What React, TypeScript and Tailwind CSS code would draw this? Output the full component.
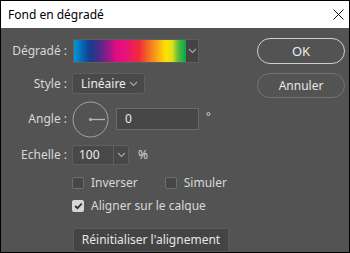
import React from "react";

function Chevron({ className = "" }: { className?: string }) {
  return (
    <svg width="9" height="6" viewBox="0 0 9 6" className={className}>
      <path d="M1 1 L4.5 4.5 L8 1" fill="none" stroke="#a8a8a8" strokeWidth="1.1" />
    </svg>
  );
}

function Check({ checked }: { checked?: boolean }) {
  return checked ? (
    <div className="w-[12px] h-[12px] rounded-[2px] bg-[#d6d6d6] flex items-center justify-center">
      <svg width="9" height="8" viewBox="0 0 9 8">
        <path d="M1.2 4 L3.5 6.2 L7.8 1.5" fill="none" stroke="#2e2e2e" strokeWidth="1.8" />
      </svg>
    </div>
  ) : (
    <div className="w-[12px] h-[12px] rounded-[2px] bg-[#474747] border border-[#6e6e6e]" />
  );
}

export default function App() {
  return (
    <div className="w-[350px] h-[253px] border border-black bg-[#535353] flex flex-col font-['Noto_Sans',sans-serif] text-[12px] leading-none select-none overflow-hidden">
      <div className="h-[27px] bg-white flex items-center justify-between pl-[7px] pr-[4px] shrink-0">
        <span className="text-black text-[12px]">Fond en dégradé</span>
        <svg width="11" height="11" viewBox="0 0 11 11" className="mr-[1px]">
          <path d="M0.5 0.5 L10.5 10.5 M10.5 0.5 L0.5 10.5" stroke="#111" strokeWidth="1" />
        </svg>
      </div>
      <div className="flex flex-1">
        <div className="flex flex-col w-[250px] text-[#d8d8d8]">
          {/* Dégradé */}
          <div className="flex items-center mt-[11px] h-[24px]">
            <div className="w-[71px] text-right pr-[5px]">Dégradé :</div>
            <div className="ml-[1px] flex h-[24px] w-[126px] border border-[#5e5e5e] bg-[#444444]">
              <div className="flex-1 bg-[linear-gradient(to_right,#0098d8_0%,#0a63b0_8%,#123f8e_14%,#4b2a8a_22%,#8e1c86_30%,#e40b80_38%,#e8127a_46%,#f02a3a_58%,#f26a22_66%,#f8a51a_74%,#ffe200_82%,#d8e01a_88%,#5abb3c_93%,#00a84a_100%)]" />
              <div className="w-[12px] flex items-center justify-center">
                <Chevron />
              </div>
            </div>
          </div>
          {/* Style */}
          <div className="flex items-center mt-[10px] h-[21px]">
            <div className="w-[71px] text-right pr-[5px]">Style :</div>
            <div className="flex items-center h-[21px] w-[73px] rounded-[3px] border border-[#5f5f5f] bg-[#494949] pl-[8px] pr-[6px] justify-between text-[#ececec]">
              <span>Linéaire</span>
              <Chevron />
            </div>
          </div>
          {/* Angle */}
          <div className="flex items-center mt-[7px] h-[36px]">
            <div className="w-[71px] text-right pr-[5px]">Angle :</div>
            <svg width="37" height="37" viewBox="0 0 37 37">
              <circle cx="18.5" cy="18.5" r="17.5" fill="none" stroke="#a4a4a4" strokeWidth="1" />
              <circle cx="18.5" cy="18.5" r="1.6" fill="#b4b4b4" />
              <path d="M18.5 18.5 L33 18.5" stroke="#b4b4b4" strokeWidth="1.3" />
            </svg>
            <div className="ml-[7px] flex items-center h-[22px] w-[83px] border border-[#6a6a6a] bg-[#474747] pl-[8px] text-[#ececec]">
              0
            </div>
            <span className="ml-[7px] self-start mt-[9px] text-[11px] text-[#d8d8d8]">°</span>
          </div>
          {/* Echelle */}
          <div className="flex items-center mt-[8px] h-[20px]">
            <div className="w-[71px] text-right pr-[5px]">Echelle :</div>
            <div className="flex h-[20px] w-[57px] rounded-[3px] border border-[#5f5f5f] bg-[#484848] text-[#ececec]">
              <div className="flex-1 flex items-center pl-[6px]">100</div>
              <div className="w-[15px] border-l border-[#5f5f5f] flex items-center justify-center">
                <Chevron />
              </div>
            </div>
            <span className="ml-[9px] text-[#d8d8d8]">%</span>
          </div>
          {/* Checkboxes */}
          <div className="flex items-center mt-[10px] h-[16px] pl-[71px]">
            <Check />
            <span className="ml-[7px]">Inverser</span>
            <div className="ml-[27px] flex items-center">
              <Check />
              <span className="ml-[7px]">Simuler</span>
            </div>
          </div>
          <div className="flex items-center mt-[7px] h-[16px] pl-[71px]">
            <Check checked />
            <span className="ml-[7px]">Aligner sur le calque</span>
          </div>
          <div className="mt-[14px] pl-[72px]">
            <div className="flex items-center justify-center h-[24px] w-[156px] rounded-[2px] border border-[#5a5a5a] bg-[#444444] text-[#e6e6e6]">
              Réinitialiser l'alignement
            </div>
          </div>
        </div>
        <div className="flex flex-col ml-[6px] mt-[10px]">
          <div className="flex items-center justify-center h-[26px] w-[88px] rounded-full border border-[#cfcfcf] text-[#ececec] text-[13px]">
            OK
          </div>
          <div className="flex items-center justify-center mt-[9px] h-[25px] w-[88px] rounded-full border border-[#737373] text-[#e6e6e6]">
            Annuler
          </div>
        </div>
      </div>
    </div>
  );
}
